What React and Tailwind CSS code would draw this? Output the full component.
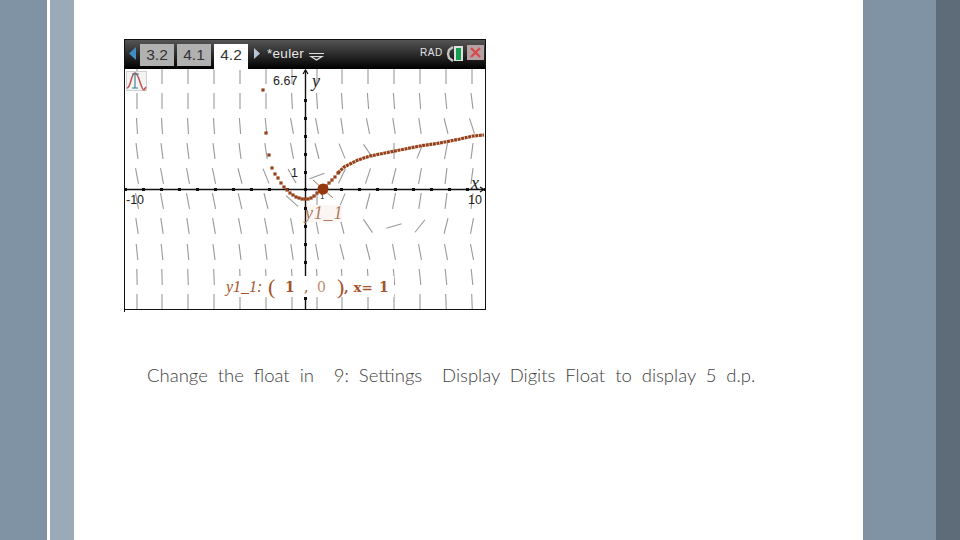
const columns = [137, 162, 188, 214, 240, 266, 292, 317, 342, 368, 394, 420, 446, 472];

// half the sideways run of each slope mark (+ leans like a backslash, - like a slash)
const field = [
  { y: 76, lean: [0, 0, 0, 0, 0, 0, 0, 0, 0, 0, 0, 0, 0, 0] },
  { y: 101, lean: [0, 0, 0, 0, 0, 0, 0.4, 0.5, 0.5, 0.6, 0.6, 0.6, 0.8, 1] },
  { y: 126, lean: [0.5, 0.5, 0.5, 0.5, 0.6, 0.8, 1.5, 1.5, 1.2, 1.6, 1.2, 1.2, 2, 2.5] },
  { y: 151, lean: [1, 1, 1, 1, 1, 1.2, 1.5, 2, 3, 4.5, 0, -3, -1.5, -1] },
  { y: 176, lean: [1.5, 1.5, 1.5, 1.6, 2, 3, 4, -7.5, -3.5, -2.5, -2, -1.5, -1, -1] },
  { y: 201, lean: [1.5, 1.5, 1.5, 1.6, 1.8, 2, 6, 0, -3, -2, -1.5, -1.2, -1, -1] },
  { y: 226, lean: [1.2, 1.2, 1.2, 1.4, 1.5, 1.5, 1.5, 1.5, 2, 4.5, -7.7, -5, -2, -1.5] },
  { y: 252, lean: [0.8, 0.8, 0.8, 1, 1, 1, 1.2, 1.4, 2, 2, 1.5, 1.5, 1.5, 1.5] },
  { y: 277, lean: [0.2, 0.2, 0.3, 0.3, 0.3, 0.4, 0.5, 0.5, 0.6, 0.6, 0.6, 0.8, 0.8, 0.8] },
  { y: 302, lean: [0, 0, 0, 0, 0, 0, 0, 0, 0, 0, 0, 0, 0.3, 0.3] },
];

const leftDots = [
  [263, 90], [266, 133], [269, 155], [272, 168], [275, 174], [278, 178], [281, 183], [284, 187],
  [287, 190], [290, 193], [293, 195], [296, 197], [299, 198], [302, 199], [305, 199], [308, 199],
  [311, 198], [314, 196], [317, 193], [320, 191], [323, 189], [326, 186], [329, 183], [332, 180],
  [335, 177], [338, 173],
];

const xTicks = Array.from({ length: 21 }, (_, i) => 125 + i * 18);
const yTicks = [99, 117, 135, 153, 171, 207, 225, 243, 261, 279, 297];

function Tab({ x, label, active }) {
  return (
    <g>
      <rect x={x} y={5} width={34} height={active ? 26 : 22} fill={active ? '#ffffff' : '#b1b1b1'} />
      <text x={x + 17} y={21} textAnchor="middle" fontSize={15.5} fill="#333333" fontFamily="'Liberation Sans', sans-serif">
        {label}
      </text>
    </g>
  );
}

function GraphScreen() {
  return (
    <svg width="362" height="273" viewBox="124 39 362 273" className="block">
      <defs>
        <linearGradient id="bar" x1="0" y1="0" x2="0" y2="1">
          <stop offset="0" stopColor="#555555" />
          <stop offset="0.8" stopColor="#111111" />
          <stop offset="1" stopColor="#000000" />
        </linearGradient>
      </defs>
      <rect x="124" y="39" width="362" height="273" fill="#ffffff" />

      {field.map((row) =>
        columns.map((x, i) => {
          const run = row.lean[i];
          const rise = Math.sqrt(64 - run * run);
          return (
            <line
              key={`${row.y}-${x}`}
              x1={x - run}
              y1={row.y - rise}
              x2={x + run}
              y2={row.y + rise}
              stroke="#999999"
              strokeWidth="1.1"
            />
          );
        })
      )}

      <rect x="304" y="205" width="38" height="17" fill="#fbf6f4" />

      <line x1="125" y1="189.5" x2="484" y2="189.5" stroke="#111111" strokeWidth="1.4" />
      <line x1="305.5" y1="70" x2="305.5" y2="310" stroke="#111111" strokeWidth="1.4" />
      {xTicks.map((x) => (
        <rect key={x} x={x - 1} y={188} width="3" height="3" fill="#111111" />
      ))}
      {yTicks.map((y) => (
        <rect key={y} x={304} y={y} width="3" height="3" fill="#111111" />
      ))}
      <path d="M303 74 L305.5 70 L308 74 M480 187 L484 189.5 L480 192" fill="none" stroke="#111111" strokeWidth="1.2" />

      <rect x="222" y="276" width="172" height="21" fill="#ffffff" />

      <g fontFamily="'Liberation Sans', sans-serif" fontSize="12.5" fill="#222222">
        <text x="273" y="85">6.67</text>
        <text x="291" y="177">1</text>
        <text x="126" y="204">-10</text>
        <text x="468" y="204">10</text>
        <text x="320" y="199" fontSize="8">1</text>
      </g>
      <g fontFamily="'Liberation Serif', serif" fontStyle="italic" fontSize="18" fill="#222222">
        <text x="312" y="87">y</text>
        <text x="471" y="189">x</text>
      </g>

      {leftDots.map(([x, y]) => (
        <rect key={`${x}-${y}`} x={x - 1.6} y={y - 1.6} width="3.2" height="3.2" fill="#96411a" />
      ))}
      <path
        d="M338 173 L344 167 L350 164 L358 160 L370 156 L385 153 L400 150 L420 146 L440 143 L460 139 L473 136 L484 135"
        fill="none"
        stroke="#96411a"
        strokeWidth="3.2"
        strokeDasharray="3 0.6"
      />
      <path d="M313 180 L333 198 M333 180 L313 198" stroke="#a0623f" strokeWidth="0.9" />
      <circle cx="323" cy="189" r="5.5" fill="#96380f" />

      <text x="305" y="219" fontFamily="'Liberation Serif', serif" fontStyle="italic" fontSize="18" letterSpacing="0.8" fill="#b07a60">
        y1_1
      </text>
      <g fill="#a5532a">
        <text x="226" y="292" fontFamily="'Liberation Serif', serif" fontStyle="italic" fontSize="16">y1_1:</text>
        <text x="268" y="294" fontFamily="'Liberation Serif', serif" fontSize="22">(</text>
        <text x="285" y="292" fontFamily="'DejaVu Serif', serif" fontSize="14" fontWeight="700">1</text>
        <text x="304" y="292" fontFamily="'DejaVu Serif', serif" fontSize="14">,</text>
        <text x="317" y="292" fontFamily="'DejaVu Serif', serif" fontSize="14" fill="#c08a6c">0</text>
        <text x="337" y="294" fontFamily="'Liberation Serif', serif" fontSize="22">)</text>
        <text x="344" y="292" fontFamily="'DejaVu Serif', serif" fontSize="13.5" fontWeight="700">, x=</text>
        <text x="379" y="292" fontFamily="'DejaVu Serif', serif" fontSize="14" fontWeight="700">1</text>
      </g>

      {/* top bar */}
      <g transform="translate(124 39)">
        <rect x="1" y="1" width="360" height="29" fill="url(#bar)" />
        <path d="M12 8 L5 14.5 L12 21 Z" fill="#3f8fc4" />
        <Tab x={16} label="3.2" />
        <Tab x={53} label="4.1" />
        <Tab x={90} label="4.2" active />
        <path d="M130 9 L136 14.5 L130 20 Z" fill="#b7c6d2" />
        <text x="143" y="19" fontSize="13.5" fill="#e6e6e6" letterSpacing="0.3" fontFamily="'Liberation Sans', sans-serif">
          *euler
        </text>
        <path d="M185 14.5 H200 M187 17.5 L192.5 21 L198 17.5 Z" fill="#333333" stroke="#dddddd" strokeWidth="1.2" />
        <text x="296" y="17" fontSize="10" letterSpacing="0.6" fill="#e2e2e2" fontFamily="'Liberation Sans', sans-serif">RAD</text>
        <rect x="330" y="7" width="9" height="15" fill="#e0e0e0" />
        <rect x="332" y="9" width="5" height="12" fill="#12a050" />
        <path d="M329 8 L325 11 L324 15 L325 19 L329 22" fill="none" stroke="#c4c4c4" strokeWidth="2.4" />
        <rect x="343" y="6" width="17" height="15" fill="#b5a3a3" />
        <path d="M347 9 L356 18 M356 9 L347 18" stroke="#d84a4a" strokeWidth="2.4" />
      </g>

      {/* graph tool icon */}
      <rect x="126.5" y="71.5" width="20" height="19" fill="#f4f4f4" stroke="#cfcfcf" />
      <path d="M127 88 C131 88 131 73 135 73 C139 73 141 90 144 90 L146 87" fill="none" stroke="#c0504d" strokeWidth="1.5" />
      <path d="M132 74 H139 M135 74 V88 M132 88 H138" fill="none" stroke="#2f7f8f" strokeWidth="1.1" />

      <rect x="124.5" y="39.5" width="361" height="270" fill="none" stroke="#111111" />
      <rect x="124" y="309" width="1" height="3" fill="#111111" />
    </svg>
  );
}

export default function App() {
  return (
    <div className="flex h-[540px] w-[960px] overflow-hidden bg-white">
      <div className="w-[47px] bg-[#7f93a5]" />
      <div className="ml-[3px] w-[24px] bg-[#9aaab8]" />
      <main className="w-[789px]">
        <div className="ml-[50px] mt-[39px]">
          <GraphScreen />
        </div>
        <p className="ml-[73px] mt-[50px] whitespace-pre font-['Lato',sans-serif] text-[18.5px] font-light leading-[26px] text-[#404040] [word-spacing:4.9px]">
          Change the float in  9: Settings  Display Digits Float to display 5 d.p.
        </p>
      </main>
      <div className="w-[73px] bg-[#7f93a5]" />
      <div className="w-[24px] bg-[#5e6b78]" />
    </div>
  );
}
